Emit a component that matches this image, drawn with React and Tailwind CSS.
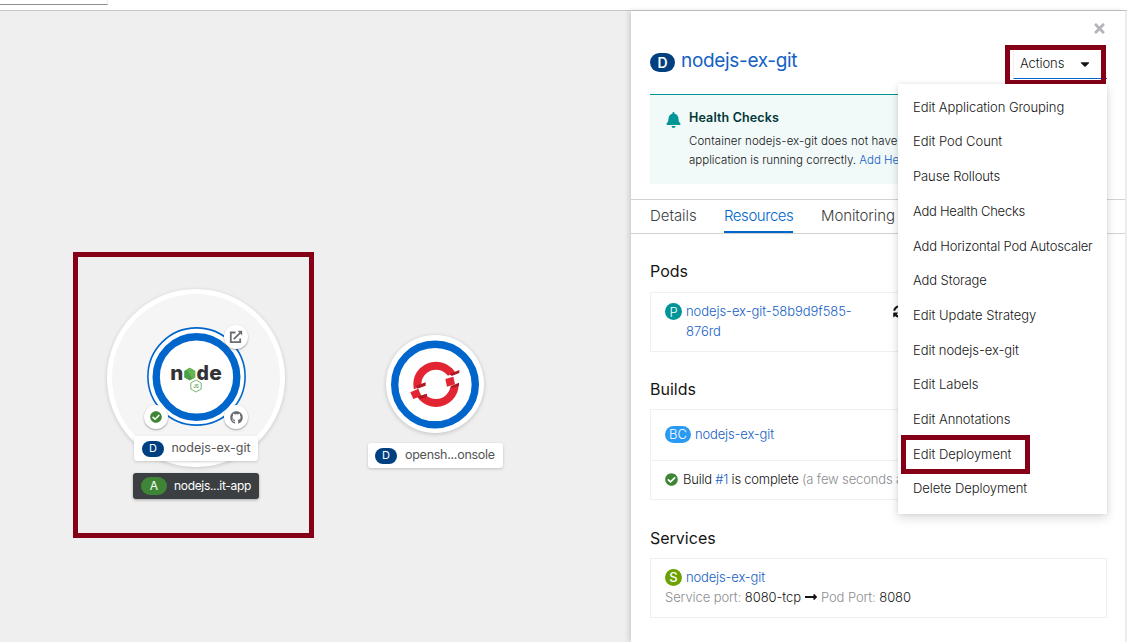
import React from "react";
import { FaBell, FaCaretDown, FaCheckCircle, FaGithub, FaLongArrowAltRight, FaSyncAlt, FaTimes } from "react-icons/fa";

const ACTIONS = [
  ["Edit Application Grouping", "tracking-[-0.07px]"],
  ["Edit Pod Count", "tracking-[-0.04px]"],
  ["Pause Rollouts", "tracking-[-0.1px]"],
  ["Add Health Checks", "tracking-[-0.26px]"],
  ["Add Horizontal Pod Autoscaler", "tracking-[-0.18px]"],
  ["Add Storage", "tracking-[-0.1px]"],
  ["Edit Update Strategy", "tracking-[-0.02px]"],
  ["Edit nodejs-ex-git", "tracking-[-0.06px]"],
  ["Edit Labels", "tracking-[-0.02px]"],
  ["Edit Annotations", "tracking-[-0.04px]"],
  ["Edit Deployment", "tracking-[-0.04px]"],
  ["Delete Deployment", "tracking-[-0.07px]"],
];

function Badge({ children, className }) {
  return (
    <span className={`flex shrink-0 items-center justify-center rounded-full text-white ${className}`}>{children}</span>
  );
}

function Decorator({ className, children }) {
  return (
    <div className={`absolute flex size-6 items-center justify-center rounded-full bg-white text-[#6a6e73] shadow-[0_1px_2px_rgba(0,0,0,0.35)] ${className}`}>
      {children}
    </div>
  );
}

function NodeLogo() {
  return (
    <svg className="absolute left-[14px] top-[24px]" width="70" height="46" viewBox="161 351 70 46">
      <g fill="#333" fontFamily="Inter, sans-serif" fontWeight="800" fontSize="20">
        <text x="170.2" y="379.5" textLength="13" lengthAdjust="spacingAndGlyphs">n</text>
        <text x="196.6" y="379.5" textLength="12.4" lengthAdjust="spacingAndGlyphs">d</text>
        <text x="209.2" y="379.5" textLength="12.6" lengthAdjust="spacingAndGlyphs">e</text>
      </g>
      <path d="M189.7 367.8l5.500 3.200v6.400l-5.500 3.200-5.500-3.200v-6.400z" fill="#4b9e45" />
      <path d="M189.7 367.8l5.500 3.200v6.400l-2.700 1.600-5.600-9.600z" fill="#65b653" />
      <path d="M196 380l5.200 3v6l-5.200 3-5.200-3v-6z" fill="none" stroke="#6aad62" strokeWidth="0.9" />
      <text x="193.2" y="388.4" fill="#559f4e" fontFamily="Inter, sans-serif" fontSize="5" fontWeight="600" textLength="5.6" lengthAdjust="spacingAndGlyphs">JS</text>
    </svg>
  );
}

function OpenShiftLogo() {
  return (
    <svg className="absolute left-[19px] top-[20px]" width="60" height="58" viewBox="0 0 180 174">
      <circle cx="93" cy="88" r="56" fill="none" stroke="#e22433" strokeWidth="24" />
      <path d="M14 107l49-18v28l-46 17zM119 66l50-20v38l-49 19z" fill="#fff" />
      <path d="M16 112l24-11 9 22-24 9zM121 72l24-7 5 23-24 7z" fill="#e22433" />
      <path d="M34 92l28-10v10l-25 9zM40 124l26-8v9l-21 8zM134 57l29-12v9l-23 9zM136 94l26-11v10l-22 7z" fill="#b01a25" />
    </svg>
  );
}

function Topology() {
  return (
    <main className="relative w-[631px] shrink-0 overflow-hidden bg-[#efefef]">
      <div className="absolute left-[107px] top-[277.5px] size-[178px] rounded-full border-[5px] border-white bg-[#f5f5f5] shadow-[0_1px_4px_rgba(0,0,0,0.16)]" />
      <div className="absolute left-[147px] top-[316px] size-[99px] rounded-full bg-white">
        <svg className="absolute inset-0" width="99" height="99">
          <circle cx="49.5" cy="49.5" r="48.6" fill="none" stroke="#06c" strokeWidth="1.6" />
          <circle cx="49.5" cy="50" r="40.3" fill="none" stroke="#06c" strokeWidth="7.4" />
        </svg>
        <NodeLogo />
      </div>
      <Decorator className="left-[224px] top-[314px]">
        <svg width="14" height="14" viewBox="0 0 14 14" fill="none" stroke="currentColor" strokeWidth="1.8">
          <path d="M6.5 2.5H1.8v9.7h9.4V8.500M4.800 9.200l6.600-6.600" />
          <path d="M8.600.8h4.600v4.600z" fill="currentColor" stroke="none" />
        </svg>
      </Decorator>
      <Decorator className="left-[144px] top-[394px]"><FaCheckCircle className="size-3 text-[#3e8635]" /></Decorator>
      <Decorator className="left-[224px] top-[394px]"><FaGithub className="size-[13px]" /></Decorator>
      <div className="absolute left-[134px] top-[425px] flex h-[25px] w-[124px] items-center rounded-[3px] bg-white pl-2 text-[12.5px] text-[#555] shadow-[0_1px_3px_rgba(0,0,0,0.16)]">
        <Badge className="h-4 w-[22px] bg-[#004080] text-[11px]">D</Badge>
        <span className="ml-[7.5px] whitespace-nowrap tracking-[-0.02px]">nodejs-ex-git</span>
      </div>
      <div className="absolute left-[133px] top-[462px] flex h-[26px] w-[126px] items-center rounded-[3px] bg-[#3b3f42] pl-2 text-[12px] text-white shadow-[0_1px_3px_rgba(0,0,0,0.3)]">
        <Badge className="h-[18px] w-[26px] bg-[#3e8635] text-[12px]">A</Badge>
        <span className="ml-[7px] whitespace-nowrap tracking-[-0.32px]">nodejs...it-app</span>
      </div>
      <div className="absolute left-[386px] top-[324px] size-[98px] rounded-full bg-white shadow-[0_1px_4px_rgba(0,0,0,0.2)]">
        <svg className="absolute inset-0" width="98" height="98">
          <circle cx="49" cy="49.5" r="40.3" fill="none" stroke="#06c" strokeWidth="7.4" />
        </svg>
        <OpenShiftLogo />
      </div>
      <div className="absolute left-[368px] top-[432px] flex h-[25px] w-[135px] items-center rounded-[3px] bg-white pl-[7px] text-[12.5px] text-[#555] shadow-[0_1px_3px_rgba(0,0,0,0.2)]">
        <Badge className="h-4 w-[22px] bg-[#004080] text-[11px]">D</Badge>
        <span className="ml-[8px] whitespace-nowrap tracking-[-0.27px]">opensh...onsole</span>
      </div>
      <div className="absolute left-[73px] top-[241px] h-[286px] w-[241px] border-[5px] border-[#850017]" />
    </main>
  );
}

function ActionMenu() {
  return (
    <div className="absolute left-[267px] top-[73px] z-10 h-[430px] w-[209px] bg-white pt-[6.2px] text-[13px] font-light text-[#151515] shadow-[0_4px_10px_rgba(3,3,3,0.14),0_0_4px_rgba(3,3,3,0.08)]">
      {ACTIONS.map(([label, tracking]) => (
        <div key={label} className={`flex h-[34.7px] items-center whitespace-nowrap pl-[15px] ${tracking}`}>{label}</div>
      ))}
      <div className="absolute left-[3px] top-[351px] h-[39px] w-[129px] border-[5px] border-[#850017]" />
    </div>
  );
}

function SidePanel() {
  return (
    <aside className="relative z-10 flex w-[494px] shrink-0 flex-col bg-white shadow-[-2px_0_5px_rgba(3,3,3,0.15)]">
      <div className="flex h-[41px] shrink-0 justify-end pr-[18px] pt-[10px]"><FaTimes className="size-[15px] text-[#b3b5b8]" /></div>
      <header className="flex h-[42px] shrink-0 pl-[19px]">
        <Badge className="mt-px h-[19px] w-[25px] bg-[#004080] text-[14px] font-semibold">D</Badge>
        <h1 className="ml-[6px] mt-[-5px] h-7 whitespace-nowrap text-[19px] leading-7 tracking-[-0.33px] text-[#1461c5]">nodejs-ex-git</h1>
        <div className="relative ml-auto mr-[18px] mt-[-2px] flex h-[29px] w-[94px] items-center justify-between border-b border-l border-b-[#06c] border-l-[#f0f0f0] pl-[6px] pr-[15px] text-[13px] font-light text-[#151515]">
          <span className="mt-[-1px] tracking-[-0.1px]">Actions</span>
          <FaCaretDown className="mt-[-1px] size-[14px]" />
          <div className="absolute left-[-9px] top-[-5px] h-10 w-[101px] border-[5px] border-[#850017]" />
        </div>
      </header>
      <section className="ml-[19px] mr-[18px] flex h-[90px] shrink-0 border-t border-[#009596] bg-[#f1f9f9] pl-4">
        <FaBell className="mt-[17px] h-4 w-[15px] text-[#009596]" />
        <div className="ml-[8px] mt-[13px] whitespace-nowrap">
          <h2 className="text-[12.5px] font-semibold leading-5 tracking-[0.14px] text-[#003737]">Health Checks</h2>
          <p className="mt-1 text-[11.5px] font-light leading-[19px] text-[#151515]">
            <span className="tracking-[0.08px]">Container nodejs-ex-git does not have</span><br />
            application is running correctly. <a className="text-[#1461c5]">Add Health Checks</a>
          </p>
        </div>
      </section>
      <nav className="mt-[15px] flex h-[35px] shrink-0 gap-7 border-y border-[#d2d2d2] pl-[19px] text-[15px] font-light text-[#3c3f42]">
        <span className="flex w-[46px] items-center whitespace-nowrap tracking-[-0.05px]">Details</span>
        <span className="flex w-[69px] items-center whitespace-nowrap border-b-2 border-[#06c] pt-0.5 tracking-[-0.45px] text-[#06c]">Resources</span>
        <span className="flex items-center whitespace-nowrap tracking-[-0.1px]">Monitoring</span>
      </nav>
      <div className="pl-[19px] pr-[18px] text-[13px] font-light leading-5 text-[#151515]">
        <h2 className="mt-[27px] h-5 text-[16px] font-normal">Pods</h2>
        <div className="mt-[11px] flex h-[60px] border border-[#f0f0f0] pl-[14px] pt-2">
          <Badge className="mt-[2px] size-[17px] bg-[#009596] text-[13px]">P</Badge>
          <a className="ml-1 w-[170px] tracking-[-0.06px] text-[#1461c5]">nodejs-ex-git-58b9d9f585-<br />876rd</a>
          <FaSyncAlt className="ml-[37px] mt-1 size-[13px]" />
        </div>
        <h2 className="mt-[27px] h-5 text-[16px] font-normal">Builds</h2>
        <div className="mt-[10px] h-[91px] border border-[#f0f0f0]">
          <div className="flex h-[51px] items-center border-b border-[#f0f0f0] pb-0.5 pl-[14px]">
            <Badge className="h-[17px] w-[26px] bg-[#2b9af3] text-[13px]">BC</Badge>
            <a className="ml-1 tracking-[-0.15px] text-[#1461c5]">nodejs-ex-git</a>
          </div>
          <div className="flex h-[36px] items-center whitespace-nowrap pl-[14px]">
            <FaCheckCircle className="size-[13px] text-[#3e8635]" />
            <span className="ml-[5px] tracking-[-0.23px]">Build <a className="text-[#1461c5]">#1</a> is complete <span className="tracking-[-0.13px] text-[#8a8d90]">(a few seconds ago)</span></span>
          </div>
        </div>
        <h2 className="mt-[28px] h-5 text-[16px] font-normal">Services</h2>
        <div className="mt-[10px] h-[60px] border border-[#f0f0f0] pl-[14px] pt-2">
          <div className="flex h-5 items-center">
            <Badge className="size-[17px] bg-[#6ca100] text-[13px] font-medium">S</Badge>
            <a className="ml-1 tracking-[-0.15px] text-[#1461c5]">nodejs-ex-git</a>
          </div>
          <div className="flex h-5 items-center whitespace-nowrap tracking-[-0.08px] text-[#8a8d90]">
            <span>Service port: <span className="text-[#151515]">8080-tcp</span></span>
            <FaLongArrowAltRight className="mx-1 h-4 w-3 text-[#151515]" />
            <span>Pod Port: <span className="text-[#151515]">8080</span></span>
          </div>
        </div>
      </div>
      <ActionMenu />
    </aside>
  );
}

export default function App() {
  return (
    <div className="flex h-[642px] w-[1127px] flex-col overflow-hidden bg-white font-['Inter',sans-serif]">
      <header className="h-[11px] shrink-0 border-b border-[#c7c7c7]">
        <div className="h-[5px] w-[108px] border-b border-r border-b-[#8a8d90] border-r-[#ededed]" />
      </header>
      <div className="flex h-[631px]">
        <Topology />
        <SidePanel />
        <div className="w-0.5 bg-[#f0f0f0]" />
      </div>
    </div>
  );
}
